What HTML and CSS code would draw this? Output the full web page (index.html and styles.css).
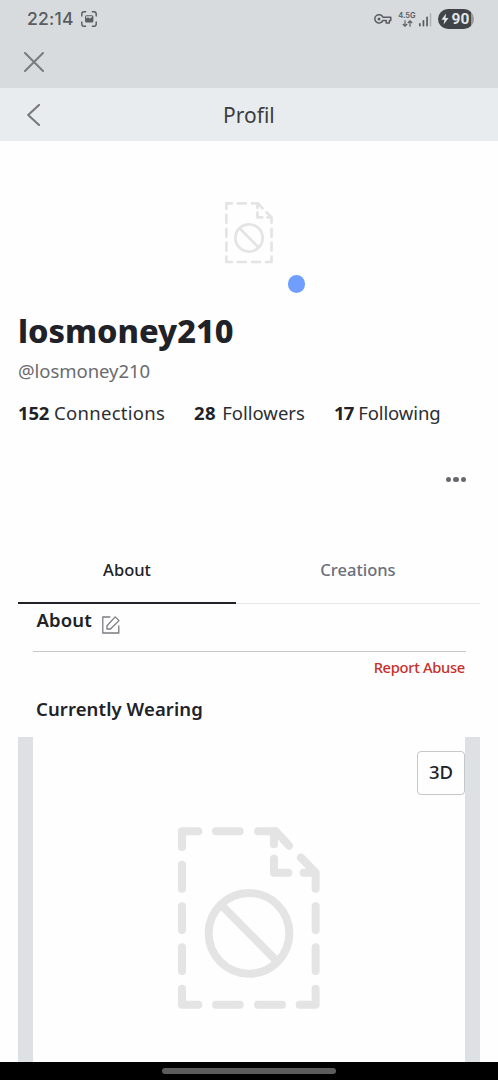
FILE: index.html
```html
<!DOCTYPE html>
<html lang="en">
<head>
<meta charset="utf-8">
<title>Profil</title>
<link rel="stylesheet" href="styles.css">
</head>
<body>
<svg class="defs" width="0" height="0">
  <symbol id="missing-file" viewBox="54 52 426 546">
    <g fill="none" stroke="currentColor" stroke-width="24" stroke-linecap="round" stroke-linejoin="round">
      <path d="M66 112V65H115M168 65H239M294 65H348L387 108M342 65V104M342 147V189H385M423 144L467 189M431 189H467V237M467 290V361M467 413V484M467 537V585H419M366 585H294M239 585H168M115 585H66V537M66 484V413M66 361V290M66 237V165"/>
      <circle cx="267" cy="371" r="121"/>
      <path d="M188 290L348 452"/>
    </g>
  </symbol>
</svg>
<div class="screen">
  <div class="status">
    <span class="clock">22:14</span>
    <svg class="shot" viewBox="0 0 16 16"><path d="M.8 5V3Q.8.8 3 .8H4.6M11.4.8H13Q15.2.8 15.2 3V5M15.2 11V13Q15.2 15.2 13 15.2H11.4M4.6 15.2H3Q.8 15.2.8 13V11" fill="none" stroke="#595c60" stroke-width="1.4" stroke-linecap="round"/><rect x="4" y="4.2" width="8.4" height="7.4" rx="1.6" fill="#595c60"/><path d="M5.2 7.6L7 6.3L8.7 7.4L11.2 6V5.3H5.2Z" fill="#d7dbde"/></svg>
    <svg class="key" viewBox="0 0 18 12"><path d="M8.9 4.3H16.8V7.4H15.4V10H12.2V7.4H8.9A4.2 4.2 0 1 1 8.9 4.3Z" fill="none" stroke="#595c60" stroke-width="1.5" stroke-linejoin="round"/><circle cx="5" cy="5.9" r="1.5" fill="#595c60"/></svg>
    <span class="network"><span>4.5G</span><svg viewBox="0 0 11 7"><path d="M3 .3V6M.8 4L3 6.2L5.2 4M8 6.7V1M5.8 3L8 .8L10.2 3" fill="none" stroke="#595c60" stroke-width="1.1"/></svg></span>
    <svg class="signal" viewBox="0 0 13 14"><g fill="#595c60"><rect x="0" y="10" width="1.7" height="3.5" rx=".8"/><rect x="3.6" y="7" width="1.7" height="6.5" rx=".8"/><rect x="7.2" y="3.5" width="1.7" height="10" rx=".8"/></g><rect x="10.8" y="0" width="1.5" height="13.5" rx=".7" fill="#adb1b4"/></svg>
    <span class="battery"><svg viewBox="0 0 8 12"><path d="M5 .5L.5 6.8H3.4L2.6 11.5L7.5 5H4.5Z" fill="#e3e6e8"/></svg><span>90</span></span>
  </div>
  <div class="closebar"><svg class="close" viewBox="0 0 20 20"><path d="M1 1L19 19M19 1L1 19" fill="none" stroke="#797b7e" stroke-width="2" stroke-linecap="round"/></svg></div>
  <header class="header">
    <svg class="back" viewBox="0 0 13 22"><path d="M12 1L1.2 11L12 21" fill="none" stroke="#77797b" stroke-width="2.1" stroke-linecap="square" stroke-linejoin="round"/></svg>
    <h1 class="heading">Profil</h1>
  </header>
  <main class="profile">
    <div class="avatar"><svg class="avatar-file"><use href="#missing-file"/></svg><span class="presence"></span></div>
    <h2 class="name">losmoney210</h2>
    <p class="handle">@losmoney210</p>
    <div class="stats"><span class="stat s1"><b>152</b>Connections</span><span class="stat s2"><b>28</b>Followers</span><span class="stat s3"><b>17</b>Following</span></div>
    <div class="more"><i></i><i></i><i></i></div>
    <nav class="tabs"><span class="tab active">About</span><span class="tab">Creations</span></nav>
    <section class="about">
      <h3 class="section-title">About</h3>
      <svg class="edit" viewBox="0 0 18 18"><g fill="none" stroke="#7b7c80" stroke-width="1.3"><path d="M8.3 1H.8V17H16.8V9.5" stroke-linejoin="round"/><path d="M5 13V9.7L13.2.9L17 4.6L8.5 13Z" stroke-linejoin="round"/></g></svg>
    </section>
    <div class="report">Report Abuse</div>
    <h3 class="section-title wearing">Currently Wearing</h3>
    <section class="outfit">
      <button class="toggle">3D</button>
      <svg class="outfit-file"><use href="#missing-file"/></svg>
    </section>
  </main>
  <footer class="navbar"><span class="pill"></span></footer>
</div>
</body>
</html>
```
FILE: styles.css
```css
* { box-sizing: border-box; margin: 0; padding: 0; }
body { width: 498px; background: #fefefe; color: #202227; font-family: "Noto Sans", sans-serif; }
.defs { position: absolute; }
.screen { height: 1080px; display: flex; flex-direction: column; overflow: hidden; }
svg { display: block; flex: none; }

.status { height: 38px; flex: none; background: #d7dbde; display: flex; align-items: center; padding: 0 24px 0 27px; }
.clock { font: 500 17.5px/20px Inter, sans-serif; letter-spacing: .2px; color: #595c60; width: 54px; white-space: nowrap; }
.shot { width: 16px; height: 16px; }
.key { width: 18px; height: 12px; margin-left: 277px; }
.network { width: 18px; margin-left: 6px; display: flex; flex-direction: column; align-items: center; font: 600 7.5px/7px Inter, sans-serif; color: #595c60; }
.network svg { width: 11px; height: 7px; margin-top: 1px; }
.signal { width: 13px; height: 14px; margin-left: 3px; margin-top: 1px; }
.battery { width: 36px; height: 20px; flex: none; margin-left: 6px; border-radius: 10px; background: linear-gradient(90deg, #404347 33px, #979a9d 33px); display: flex; align-items: center; padding-left: 3px; gap: 2.5px; font: 700 15.5px/20px Roboto, sans-serif; color: #e3e6e8; }
.battery svg { width: 8px; height: 12px; }

.closebar { height: 50px; flex: none; background: #d7dbde; padding: 14px 24px; }
.close { width: 20px; height: 20px; }
.header { height: 53px; flex: none; background: #e8ecef; display: flex; align-items: center; padding-left: 27px; }
.back { width: 13px; height: 22px; }
.heading { margin-left: 183px; font-size: 21px; line-height: 30px; font-weight: 400; color: #3b3d40; }

.profile { flex: 1; min-height: 0; display: flex; flex-direction: column; padding: 0 18px; }
.avatar { height: 168px; flex: none; position: relative; padding: 61px 0 0 207px; color: #e4e4e4; }
.avatar-file { width: 48px; height: 61.5px; }
.presence { position: absolute; left: 269.5px; top: 134px; width: 17.5px; height: 17.5px; border-radius: 50%; background: #709eff; }
.name { height: 40px; flex: none; font-size: 32.5px; line-height: 43px; font-weight: 800; white-space: nowrap; }
.handle { height: 42px; flex: none; font-size: 18.5px; line-height: 43px; letter-spacing: -.05px; color: #6a6b6e; }
.stats { height: 42px; flex: none; display: flex; font-size: 18.5px; line-height: 43px; color: #2c2e32; }
.stat { white-space: nowrap; }
.s1 { width: 176px; letter-spacing: .3px; }
.s2 { width: 140px; }
.s3 { letter-spacing: -.1px; }
.stat b { display: inline-block; color: #202227; letter-spacing: -.2px; margin-right: 4.8px; }
.s2 b { letter-spacing: .5px; margin-right: 6px; }
.s3 b { letter-spacing: -.9px; }
.more { height: 93px; flex: none; display: flex; justify-content: flex-end; gap: 2.2px; padding: 44px 14px 0 0; }
.more i { width: 5.2px; height: 5.2px; border-radius: 50%; background: #68696d; }
.tabs { height: 78px; flex: none; width: 462px; display: flex; }
.tab { flex: 1; text-align: center; font-size: 16.5px; line-height: 88px; height: 78px; font-weight: 500; color: #6b6e7c; border-bottom: 1px solid #e8e8e9; }
.tab.active { flex: 0 0 218px; color: #202227; border-bottom: 2px solid #202227; }
.about { height: 48px; flex: none; width: 433px; margin-left: 14.5px; border-bottom: 1px solid #c7c8c9; display: flex; padding-left: 4px; }
.section-title { font-size: 18.5px; line-height: 31px; letter-spacing: .1px; font-weight: 600; }
.edit { width: 18px; height: 18px; margin: 12px 0 0 10.5px; }
.report { height: 33px; flex: none; text-align: right; padding-right: 15px; font-size: 14.7px; line-height: 30px; letter-spacing: -.3px; font-weight: 500; color: #c6302b; }
.wearing { height: 52px; flex: none; line-height: 48px; padding-left: 18px; }
.outfit { flex: 1; min-height: 0; width: 462px; border: solid #dee1e4; border-width: 0 15px; display: flex; flex-direction: column; padding-top: 14px; color: #e4e4e4; }
.toggle { width: 48px; height: 44px; flex: none; align-self: flex-end; border: 1px solid #c6c7c8; border-radius: 4px; background: #fefefe; font: 500 18.5px/38px "Noto Sans", sans-serif; padding-bottom: 2px; color: #202227; }
.outfit-file { width: 142px; height: 182px; flex: none; margin: 32px 0 0 145px; }
.navbar { height: 18px; flex: none; background: #000; display: flex; justify-content: center; padding-top: 6px; }
.pill { width: 174px; height: 5.5px; border-radius: 3px; background: #5c5c5c; }
```
